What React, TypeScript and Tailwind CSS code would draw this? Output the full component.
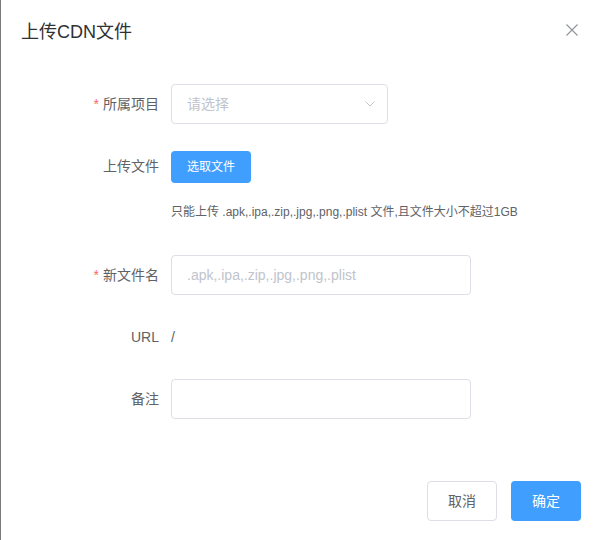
import React from 'react';

const font = { fontFamily: '"Liberation Sans", "Noto Sans CJK SC", sans-serif' };

const Label: React.FC<{ text: string; required?: boolean }> = ({ text, required }) => (
  <div className="w-[150px] shrink-0 pr-3 text-right text-sm leading-10 text-[#606266]">
    {required && <span className="mr-1 text-[#f56c6c]">*</span>}
    {text}
  </div>
);

const App: React.FC = () => {
  return (
    <div className="h-[540px] w-[600px] overflow-hidden bg-white border-l border-[#7a7a7a]" style={font}>
      {/* Header */}
      <div className="flex items-start justify-between px-5 pt-5 pb-[10px]">
        <span className="text-lg leading-6 text-[#303133]">上传CDN文件</span>
        <button className="mt-[2px] flex h-4 w-4 items-center justify-center" aria-label="close">
          <svg width="12" height="12" viewBox="0 0 12 12">
            <path d="M0.5 0.5 L11.5 11.5 M11.5 0.5 L0.5 11.5" stroke="#909399" strokeWidth="1.1" fill="none" />
          </svg>
        </button>
      </div>

      {/* Form */}
      <div className="px-5 pt-[30px]">
        <div className="mb-[22px] flex">
          <Label text="所属项目" required />
          <div className="flex h-10 w-[217px] items-center justify-between rounded border border-[#dcdfe6] pl-[15px] pr-[12px]">
            <span className="text-sm text-[#c0c4cc]">请选择</span>
            <svg width="10" height="6" viewBox="0 0 10 6">
              <path d="M0.5 0.5 L5 5 L9.5 0.5" stroke="#c0c4cc" strokeWidth="1" fill="none" />
            </svg>
          </div>
        </div>

        <div className="mb-[33px] flex">
          <Label text="上传文件" />
          <div className="pt-[5px]">
            <button className="h-8 w-20 rounded bg-[#409eff] text-xs text-white">选取文件</button>
            <div className="mt-[19px] text-xs leading-5 text-[#606266]">
              只能上传 .apk,.ipa,.zip,.jpg,.png,.plist 文件,且文件大小不超过1GB
            </div>
          </div>
        </div>

        <div className="mb-[22px] flex">
          <Label text="新文件名" required />
          <div className="flex h-10 w-[300px] items-center rounded border border-[#dcdfe6] px-[15px]">
            <span className="text-sm text-[#c0c4cc]">.apk,.ipa,.zip,.jpg,.png,.plist</span>
          </div>
        </div>

        <div className="mb-[22px] flex">
          <Label text="URL" />
          <div className="text-sm leading-10 text-[#606266]">/</div>
        </div>

        <div className="flex">
          <Label text="备注" />
          <div className="h-10 w-[300px] rounded border border-[#dcdfe6]" />
        </div>
      </div>

      {/* Footer */}
      <div className="mt-[62px] flex justify-end gap-[14px] pr-[19px]">
        <button className="h-10 w-[70px] rounded border border-[#dcdfe6] bg-white text-sm text-[#606266]">取消</button>
        <button className="h-10 w-[70px] rounded bg-[#409eff] text-sm text-white">确定</button>
      </div>
    </div>
  );
};

export default App;
